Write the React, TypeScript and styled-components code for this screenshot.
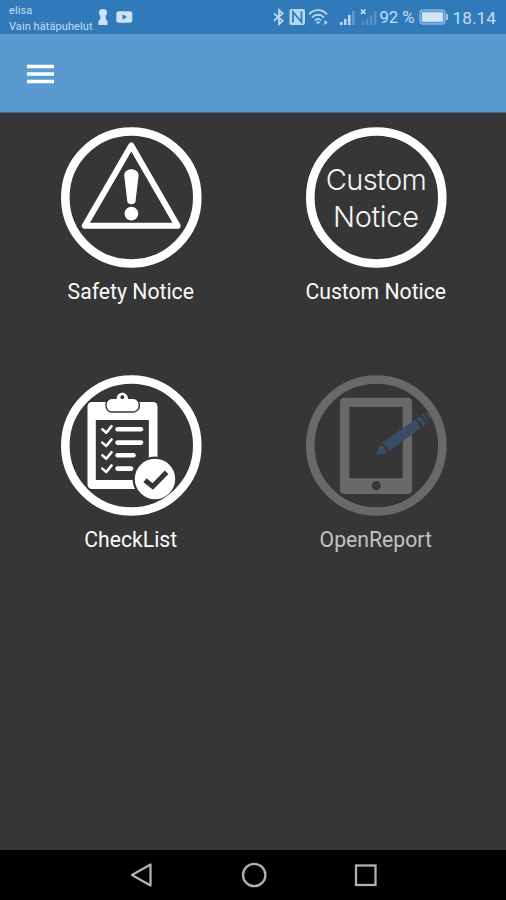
import React from "react";
import styled, { createGlobalStyle } from "styled-components";

const GlobalStyle = createGlobalStyle`
  * { box-sizing: border-box; }
  body { margin: 0; background: #363636; }
`;

const Screen = styled.div`
  display: flex;
  flex-direction: column;
  width: 506px;
  height: 900px;
  overflow: hidden;
  background: #363636;
  font-family: Roboto, "Liberation Sans", sans-serif;
`;

const StatusBar = styled.header`
  display: flex;
  justify-content: space-between;
  flex: none;
  height: 34px;
  padding: 0 10px 0 9px;
  background: #307ab9;
  color: #c3def3;
`;

const StatusGroup = styled.div`
  display: flex;
  align-items: center;
`;

const Carrier = styled.div`
  width: 84px;
  padding-top: 3px;
  font-size: 11px;
  line-height: 15.5px;
  letter-spacing: 0.08px;
  white-space: nowrap;
`;

const StatusText = styled.span<{ $size: number; $gap: number }>`
  margin-left: ${({ $gap }) => $gap}px;
  padding-top: 1px;
  font-size: ${({ $size }) => $size}px;
  line-height: 20px;
  white-space: nowrap;
`;

const StatusIcon = styled.svg<{ $gap?: number }>`
  display: block;
  flex: none;
  margin-left: ${({ $gap = 0 }) => $gap}px;
`;

const AppBar = styled.div`
  display: flex;
  align-items: center;
  flex: none;
  height: 79px;
  padding-left: 26.5px;
  background: #5b9ad0;
  border-bottom: 1px solid #416583;
`;

const MenuIcon = styled.svg`
  display: block;
  margin-top: 1px;
`;

const MenuButton = styled.button`
  padding: 0;
  border: 0;
  background: none;
`;

const Tiles = styled.main`
  display: grid;
  grid-template-columns: 245px 245px;
  grid-auto-rows: 248px;
  flex: 1;
  align-content: start;
  padding: 13px 0 0 9px;
`;

const Tile = styled.div`
  display: flex;
  flex-direction: column;
  align-items: center;
`;

const TileIcon = styled.svg`
  display: block;
  width: 143px;
  height: 143px;
`;

const TileLabel = styled.span<{ $dim?: boolean }>`
  margin-top: 10px;
  margin-right: 1.5px;
  font-size: 21.2px;
  line-height: 26px;
  color: ${({ $dim }) => ($dim ? "#c2c2c2" : "#fafafa")};
  white-space: nowrap;
`;

const IconText = styled.text`
  font-family: Inter, "Liberation Sans", sans-serif;
  font-size: 29px;
  font-weight: 300;
  fill: #f4f4f4;
`;

const NavBar = styled.nav`
  display: flex;
  justify-content: center;
  align-items: center;
  gap: 87.5px;
  flex: none;
  height: 50px;
  padding-left: 1px;
  background: #000;
`;

const NavIcon = styled.svg`
  display: block;
  fill: none;
  stroke: #b0b0b0;
  stroke-width: 2.3;
`;

const Ring = ({ color = "#fff" }: { color?: string }) => (
  <circle cx="71.3" cy="71.5" r="66" fill="none" stroke={color} strokeWidth="8.6" />
);

const SafetyIcon = () => (
  <TileIcon viewBox="0 0 143 143">
    <Ring />
    <path d="M71.3 19.5 L24.8 99.8 H117.6 Z" fill="none" stroke="#fff" strokeWidth="6" strokeLinejoin="round" />
    <path d="M64.2 49.5 C64.2 41 78.6 41 78.6 49.5 L75.5 75.5 C75 79 67.8 79 67.3 75.5 Z" fill="#fff" />
    <circle cx="71.4" cy="87.6" r="6.9" fill="#fff" />
  </TileIcon>
);

const CustomIcon = () => (
  <TileIcon viewBox="0 0 143 143">
    <Ring />
    <IconText x="20.8" y="64" textLength="101">Custom</IconText>
    <IconText x="28" y="101" textLength="86">Notice</IconText>
  </TileIcon>
);

const checklistRows = [
  { y: 55.3, end: 81 },
  { y: 68.6, end: 81 },
  { y: 81.3, end: 73.5 },
  { y: 94.6, end: 71 },
];

const ChecklistIcon = () => (
  <TileIcon viewBox="0 0 143 143">
    <rect x="27.5" y="28" width="70" height="87" rx="4.5" fill="#fff" />
    <rect x="35.8" y="46" width="53" height="60" fill="#363636" />
    <path
      d="M52 25 H56.5 C57 16.5 67.6 16.5 68.2 25 H73 C80.5 25 80.5 37.3 73 37.3 H52 C45 37.3 45 25 52 25 Z"
      fill="#fff" stroke="#363636" strokeWidth="3" paintOrder="stroke"
    />
    <circle cx="62.3" cy="23.2" r="1.9" fill="#363636" />
    {checklistRows.map(({ y, end }) => (
      <g key={y} fill="none" stroke="#fff" strokeLinecap="round" strokeLinejoin="round">
        <path d={`M42.3 ${y} l4 3.4 l5.3 -6.6`} strokeWidth="2.5" />
        <path d={`M57.6 ${y} H${end}`} strokeWidth="4.6" />
      </g>
    ))}
    <circle cx="95" cy="105" r="22.5" fill="#363636" />
    <Ring />
    <circle cx="95" cy="105" r="20.2" fill="#fff" />
    <path d="M85 106.3 L92.8 112.5 L106.6 98.3" fill="none" stroke="#363636" strokeWidth="5" />
  </TileIcon>
);

const ReportIcon = () => (
  <TileIcon viewBox="0 0 143 143">
    <Ring color="#696969" />
    <path
      fillRule="evenodd" fill="#696969"
      d="M39.5 23.7 H102.5 Q107 23.7 107 28.2 V115.5 Q107 120 102.5 120 H39.5 Q35 120 35 115.5 V28.2 Q35 23.7 39.5 23.7 Z M44.3 33 V104.3 H97.7 V33 Z"
    />
    <circle cx="71.3" cy="111.7" r="4.6" fill="#363636" />
    <g fill="#3b4d66">
      <path d="M71 80.3 L75.4 70.5 Q80.5 73 81.8 79.5 Z" />
      <path d="M77 68.8 L109.7 45.7 Q113.5 48.5 116 54 L83.5 77.5 Q82 72 77 68.8 Z" />
      <path d="M111.5 44.3 L114.5 42.3 Q118.5 45.5 121 50.2 L117.7 52.4 Q115.5 47.2 111.5 44.3 Z" />
      <path d="M116.3 41 L118 40 Q122 43.5 124.2 48.2 L122.6 49.2 Q120.5 44.5 116.3 41 Z" />
      <path d="M120.3 39.4 L122.5 38 Q125.5 41 126.5 45 L125.3 46.6 Q123.5 42 120.3 39.4 Z" />
    </g>
  </TileIcon>
);

export default function App() {
  return (
    <Screen>
      <GlobalStyle />
      <StatusBar>
        <StatusGroup>
          <Carrier>
            <div>elisa</div>
            <div>Vain hätäpuhelut</div>
          </Carrier>
          <StatusIcon $gap={5} width="10" height="18" viewBox="0 0 10 18" fill="#cce3f5">
            <path d="M5 1 C9.7 1 10.2 5.5 7.5 8 L8.2 12 L9.5 13 V17 H.5 V13 L1.8 12 L2.5 8 C-.2 5.5.3 1 5 1 Z" />
          </StatusIcon>
          <StatusIcon $gap={8} width="17" height="12" viewBox="0 0 17 12">
            <rect x=".3" y=".3" width="16" height="11.4" rx="2.5" fill="#cce3f5" />
            <path d="M6.5 3.2 L11 6 L6.5 8.8 Z" fill="#307ab9" />
          </StatusIcon>
        </StatusGroup>
        <StatusGroup>
          <StatusIcon width="12" height="18" viewBox="0 0 12 18" fill="none" stroke="#b9d8f0" strokeWidth="1.8">
            <path d="M1 5.5 L9.7 12.8 L6 16.3 V2 L9.7 5.5 L1 12.8" />
          </StatusIcon>
          <StatusIcon $gap={4} width="17" height="18" viewBox="0 0 17 18">
            <rect x=".5" y="1" width="15.5" height="16" rx="2" fill="#b9d8f0" />
            <path d="M4 14.5 V4 L12.5 14 V3.5" fill="none" stroke="#307ab9" strokeWidth="1.8" />
          </StatusIcon>
          <StatusIcon $gap={3} width="21" height="18" viewBox="0 0 21 18" fill="none" stroke="#b9d8f0" strokeWidth="1.8">
            <path d="M0 6.3 C5 .8 13 .8 18 6.3 M3 9.5 C6.5 5.8 11.5 5.8 15 9.5 M5.8 12.5 C8 10.2 10 10.2 12.2 12.5" />
            <path d="M6.8 13.6 H11.2 L9 16.5 Z M15.5 12 L18.7 14.5 L15.5 17 Z" fill="#b9d8f0" stroke="none" />
          </StatusIcon>
          <StatusIcon $gap={9} width="18" height="18" viewBox="0 0 18 18" fill="#b9d8f0">
            <path d="M1 14 h2.6 v3 h-2.6 Z M5 11 h2.6 v6 h-2.6 Z M9 7 h2.6 v10 h-2.6 Z" />
            <path d="M13 3 h2.6 v14 h-2.6 Z" opacity=".35" />
          </StatusIcon>
          <StatusIcon $gap={3} width="19" height="18" viewBox="0 0 19 18" fill="#b9d8f0">
            <path d="M1 1.5 L5.5 6 M5.5 1.5 L1 6" stroke="#cce3f5" strokeWidth="1.7" />
            <path d="M2 14 h2.4 v3 h-2.4 Z M6 11 h2.4 v6 h-2.4 Z M10 7 h2.4 v10 h-2.4 Z M14 3 h2.4 v14 h-2.4 Z" opacity=".28" />
          </StatusIcon>
          <StatusText $size={16.7} $gap={0}>92 %</StatusText>
          <StatusIcon $gap={4} width="30" height="16" viewBox="0 0 30 16">
            <rect x="1" y="1" width="25" height="14" rx="3" fill="#5897cd" stroke="#83b3dd" strokeWidth="1.4" />
            <rect x="3" y="3.3" width="21" height="9.5" rx="1" fill="#d2e5f4" />
            <path d="M28 5 V11" stroke="#9cc4e6" strokeWidth="2" />
          </StatusIcon>
          <StatusText $size={17.3} $gap={4}>18.14</StatusText>
        </StatusGroup>
      </StatusBar>
      <AppBar>
        <MenuButton aria-label="Menu">
          <MenuIcon width="27" height="20" viewBox="0 0 27 20">
            <path d="M0 2.5 H27 M0 10 H27 M0 17.5 H27" stroke="#fff" strokeWidth="3.5" />
          </MenuIcon>
        </MenuButton>
      </AppBar>
      <Tiles>
        <Tile>
          <SafetyIcon />
          <TileLabel>Safety Notice</TileLabel>
        </Tile>
        <Tile>
          <CustomIcon />
          <TileLabel>Custom Notice</TileLabel>
        </Tile>
        <Tile>
          <ChecklistIcon />
          <TileLabel>CheckList</TileLabel>
        </Tile>
        <Tile>
          <ReportIcon />
          <TileLabel $dim>OpenReport</TileLabel>
        </Tile>
      </Tiles>
      <NavBar>
        <NavIcon width="24" height="26" viewBox="0 0 24 26">
          <path d="M3 13 L21.5 2.5 V23.5 Z" strokeLinejoin="round" />
        </NavIcon>
        <NavIcon width="26" height="26" viewBox="0 0 26 26">
          <circle cx="13.2" cy="13" r="11.2" />
        </NavIcon>
        <NavIcon width="24" height="26" viewBox="0 0 24 26">
          <rect x="2" y="3.5" width="19.5" height="19.5" />
        </NavIcon>
      </NavBar>
    </Screen>
  );
}
